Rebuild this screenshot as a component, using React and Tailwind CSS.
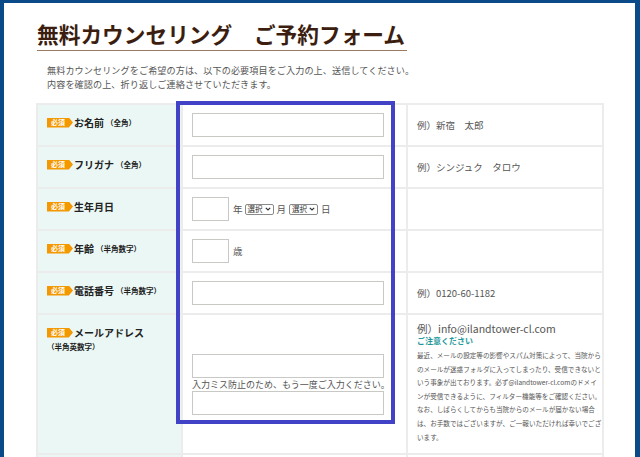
import React from "react";

const jp = "font-['Noto_Sans_CJK_JP','Noto_Sans',sans-serif]";

const Badge = () => (
  <span className="inline-flex items-center h-[10px] w-[26px] pl-[4px] bg-[#f39800] text-white text-[7px] leading-none [clip-path:polygon(0_0,84%_0,100%_50%,84%_100%,0_100%)] shrink-0">
    必須
  </span>
);

const Label = ({ title, note, wrapNote }) => (
  <td className="w-[145px] bg-[#ebf7f5] border-2 border-[#ececec] align-top pl-[9px] pr-[4px] pt-[11px]">
    <div className="flex items-center gap-[1px] text-[10px] font-bold text-[#222] leading-[13px]">
      <Badge />
      <span>{title}</span>
      {note && !wrapNote && <span className="text-[7.5px] ml-[1px]">{note}</span>}
    </div>
    {wrapNote && (
      <div className="text-[7.5px] font-bold text-[#222] mt-[3px] leading-[10px]">{note}</div>
    )}
  </td>
);

const TextInput = ({ className }) => (
  <input
    type="text"
    className={
      "block h-[24px] border border-[#c8c8c4] bg-white outline-none " + className
    }
  />
);

const SelectBox = () => (
  <span className="inline-flex items-center gap-[2px] h-[11px] px-[2px] border border-[#8a8a8a] rounded-[2px] text-[7.5px] leading-none text-[#333] bg-white">
    選択
    <svg width="6" height="4" viewBox="0 0 6 4" fill="none">
      <path d="M0.8 0.8L3 3L5.2 0.8" stroke="#333" strokeWidth="1.2" />
    </svg>
  </span>
);

const Example = ({ children }) => (
  <td className="w-[196px] border-2 border-[#ececec] pl-[9px] align-middle text-[9.5px] text-[#555]">
    {children}
  </td>
);

const noticeLines = [
  "最近、メールの設定等の影響やスパム対策によって、当院から",
  "のメールが迷惑フォルダに入ってしまったり、受信できないと",
  "いう事象が出ております。必ず@ilandtower-cl.comのドメイ",
  "ンが受信できるように、フィルター機能等をご確認ください。",
  "なお、しばらくしてからも当院からのメールが届かない場合",
  "は、お手数ではございますが、ご一報いただければ幸いでござ",
  "います。",
];

export default function App() {
  return (
    <div className={"relative min-h-[520px] bg-white border-t-[3px] border-l-4 border-r-[5px] border-[#0b4a88] " + jp}>
      <div className="pl-[33px] pr-[28px] pt-[17px]">
        <h1 className="inline-block text-[21.7px] font-bold leading-[28px] text-[#3b1e0f] border-b border-[#9a7a60] pb-[2px] pr-[2px]">
          無料カウンセリング　ご予約フォーム
        </h1>
        <div className="pl-[10px] mt-[12px] text-[9.1px] leading-[14px] text-[#555] tracking-[0.1px]">
          <p>無料カウンセリングをご希望の方は、以下の必要項目をご入力の上、送信してください。</p>
          <p>内容を確認の上、折り返しご連絡させていただきます。</p>
        </div>

        <table className="mt-[12px] ml-[-1px] w-[566px] table-fixed border-collapse">
          <tbody>
            <tr className="h-[42px]">
              <Label title="お名前" note="（全角）" />
              <td className="w-[225px] border-2 border-[#ececec] align-middle pl-[9px]">
                <TextInput className="w-[192px]" />
              </td>
              <Example>例）新宿　太郎</Example>
            </tr>
            <tr className="h-[42px]">
              <Label title="フリガナ" note="（全角）" />
              <td className="border-2 border-[#ececec] align-middle pl-[9px]">
                <TextInput className="w-[192px]" />
              </td>
              <Example>例）シンジュク　タロウ</Example>
            </tr>
            <tr className="h-[42px]">
              <Label title="生年月日" />
              <td className="border-2 border-[#ececec] align-middle pl-[9px]">
                <div className="flex items-center text-[9.5px] text-[#555]">
                  <TextInput className="w-[37px]" />
                  <span className="ml-[4px] mr-[2px]">年</span>
                  <SelectBox />
                  <span className="ml-[3px] mr-[3px]">月</span>
                  <SelectBox />
                  <span className="ml-[3px]">日</span>
                </div>
              </td>
              <Example />
            </tr>
            <tr className="h-[42px]">
              <Label title="年齢" note="（半角数字）" />
              <td className="border-2 border-[#ececec] align-middle pl-[9px]">
                <div className="flex items-center text-[9.5px] text-[#555]">
                  <TextInput className="w-[37px]" />
                  <span className="ml-[4px]">歳</span>
                </div>
              </td>
              <Example />
            </tr>
            <tr className="h-[42px]">
              <Label title="電話番号" note="（半角数字）" />
              <td className="border-2 border-[#ececec] align-middle pl-[9px]">
                <TextInput className="w-[192px]" />
              </td>
              <Example>例）0120-60-1182</Example>
            </tr>
            <tr className="h-[140px]">
              <Label title="メールアドレス" note="（半角英数字）" wrapNote />
              <td className="border-2 border-[#ececec] align-middle pl-[9px]">
                <TextInput className="w-[192px]" />
                <p className="text-[9px] leading-[13px] text-[#555] whitespace-nowrap">
                  入力ミス防止のため、もう一度ご入力ください。
                </p>
                <TextInput className="w-[192px]" />
              </td>
              <td className="border-2 border-[#ececec] align-top pl-[9px] pt-[7px] pb-[6px]">
                <p className="text-[10.5px] leading-[13px] text-[#555]">例）info@ilandtower-cl.com</p>
                <p className="text-[8px] font-bold leading-[12px] text-[#1f9a9a]">ご注意ください</p>
                <div className="mt-[2px] text-[6.6px] leading-[13.6px] text-[#555] whitespace-nowrap">
                  {noticeLines.map((line) => (
                    <div key={line}>{line}</div>
                  ))}
                </div>
              </td>
            </tr>
            <tr className="h-[42px]">
              <td className="bg-[#ebf7f5] border-2 border-[#ececec]"></td>
              <td className="border-2 border-[#ececec]"></td>
              <Example />
            </tr>
          </tbody>
        </table>
      </div>

      <div className="absolute left-[172px] top-[98px] w-[219px] h-[323px] border-4 border-[#4242c6] pointer-events-none" />
    </div>
  );
}
